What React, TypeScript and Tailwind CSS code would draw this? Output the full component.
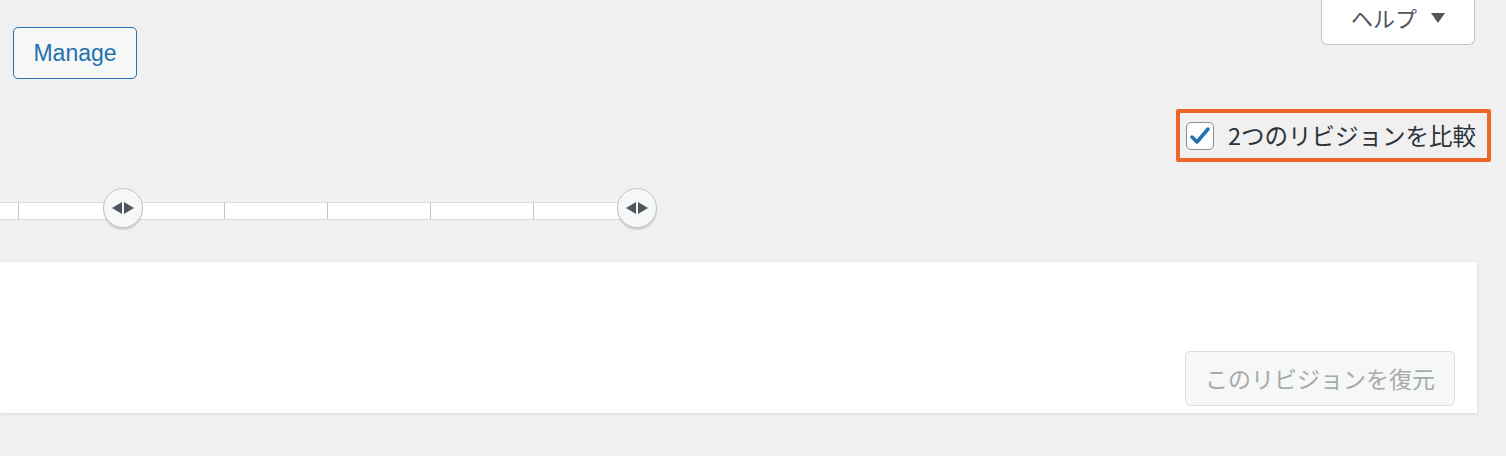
import React from "react"

const jp = "font-['Noto_Sans_CJK_JP','Noto_Sans',sans-serif]"

function Handle() {
  return (
    <div className="flex h-[40px] w-[40px] items-center justify-center rounded-full border border-[#c3c4c7] bg-[#f6f7f7] shadow-[0_2px_1px_rgba(0,0,0,0.12)]">
      <svg width="24" height="14" viewBox="0 0 24 14">
        <polygon points="1,7 11,1 11,13" fill="#50575e" />
        <polygon points="13,1 23,7 13,13" fill="#50575e" />
      </svg>
    </div>
  )
}

export default function App() {
  const ticks = [0, 1, 2, 3, 4, 5]
  return (
    <div className="relative h-[456px] w-[1506px] overflow-hidden bg-[#f0f0f1]">
      <div className="flex items-start justify-between">
        <button className="ml-[13px] mt-[27px] h-[52px] w-[124px] rounded-[5px] border border-[#2271b1] bg-[#f6f7f7] font-['Liberation_Sans',sans-serif] text-[23px] text-[#2271b1]">
          Manage
        </button>
        <div
          className={`mr-[31px] flex h-[45px] w-[154px] items-center justify-center gap-[14px] rounded-b-[6px] border-x border-b border-[#c3c4c7] bg-white pb-[9px] text-[22px] text-[#50575e] ${jp}`}
        >
          <span>ヘルプ</span>
          <svg width="14" height="10" viewBox="0 0 14 10">
            <polygon points="0,0 14,0 7,10" fill="#50575e" />
          </svg>
        </div>
      </div>

      <div className="mt-[30px] flex justify-end pr-[15px]">
        <label className="flex h-[53px] w-[315px] items-center gap-[14px] rounded-[2px] border-[4px] border-[#f06529] pl-[6px]">
          <span className="flex h-[28px] w-[28px] items-center justify-center rounded-[5px] border border-[#8c8f94] bg-white">
            <svg width="22" height="20" viewBox="0 0 22 20">
              <polyline
                points="3,11 8,16 19,3"
                fill="none"
                stroke="#2271b1"
                strokeWidth="3.5"
                strokeLinecap="round"
                strokeLinejoin="round"
              />
            </svg>
          </span>
          <span className={`text-[23.5px] text-[#2c3338] ${jp}`}>2つのリビジョンを比較</span>
        </label>
      </div>

      <div className="relative mt-[26px] h-[42px]">
        <div className="absolute left-0 top-[14px] flex h-[18px] w-[637px] border-y border-[#dcdcde] bg-white">
          <div className="w-[18px]" />
          {ticks.map((t) => (
            <div key={t} className="h-full w-[103px] border-l border-[#c3c4c7]" />
          ))}
        </div>
        <div className="absolute left-[103px] top-0">
          <Handle />
        </div>
        <div className="absolute left-[617px] top-0">
          <Handle />
        </div>
      </div>

      <div className="mt-[32px] flex h-[151px] w-[1477px] items-end justify-end bg-white pb-[7px] pr-[22px] shadow-[0_1px_3px_rgba(0,0,0,0.1)]">
        <button
          className={`h-[55px] w-[270px] rounded-[5px] border border-[#dcdcde] bg-[#f6f7f7] text-[23px] text-[#a7aaad] ${jp}`}
        >
          このリビジョンを復元
        </button>
      </div>
    </div>
  )
}
